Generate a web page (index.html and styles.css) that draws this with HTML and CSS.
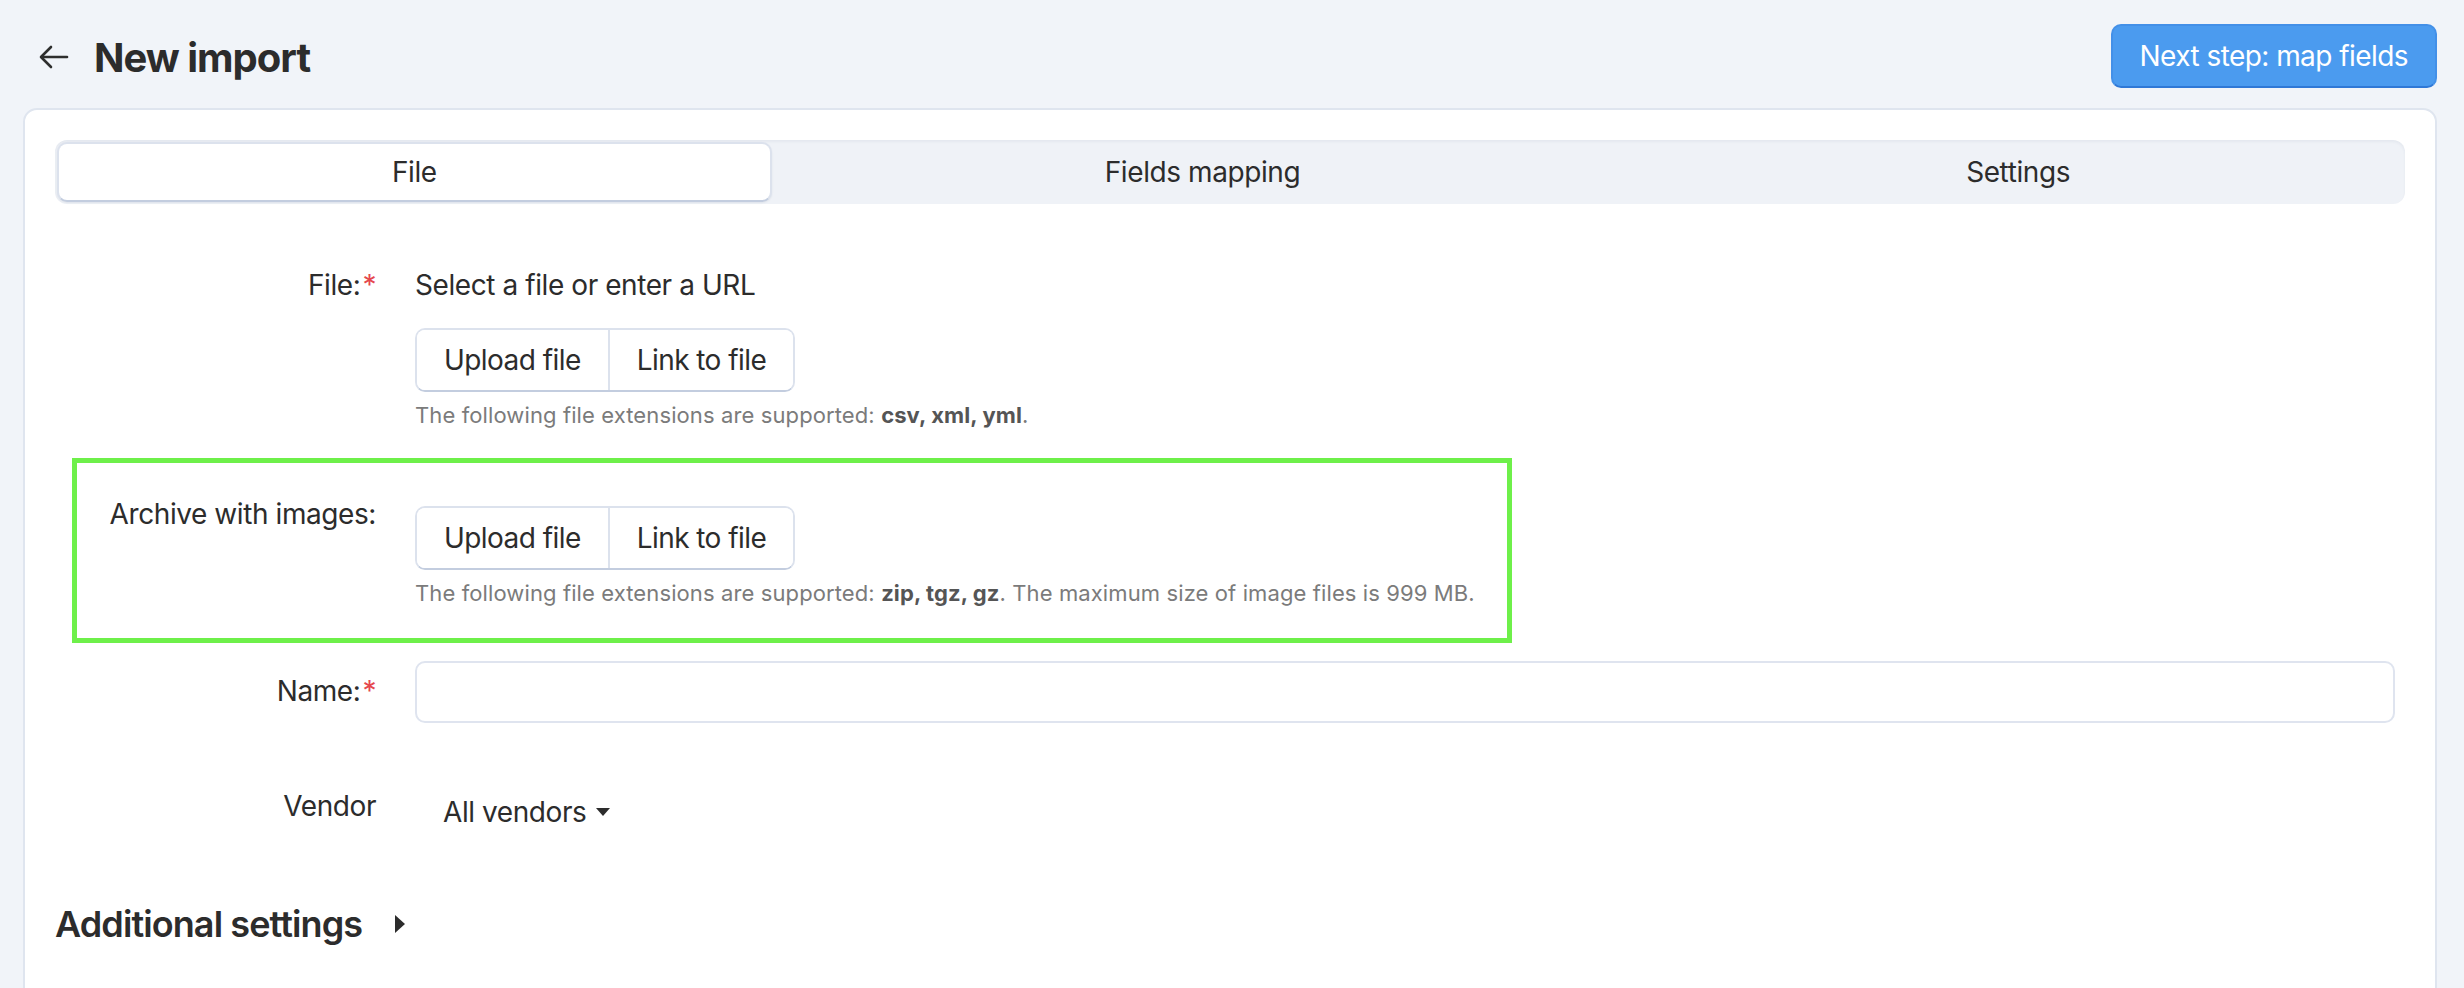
FILE: index.html
```html
<!DOCTYPE html>
<html lang="en">
<head>
    <meta charset="UTF-8">
    <meta name="viewport" content="width=device-width, initial-scale=1.0">
    <title>New import</title>
    <link rel="stylesheet" href="styles.css">
</head>
<body>

    <header class="page-header">
        <div class="title-wrap">
            <a class="back-link" href="#">
                <svg width="30" height="24" viewBox="0 0 30 24" fill="none" stroke="#2e2e2e" stroke-width="2.6" stroke-linecap="round" stroke-linejoin="round">
                    <path d="M28 12H3"/>
                    <path d="M12 2L2 12l10 10"/>
                </svg>
            </a>
            <h1>New import</h1>
        </div>
        <button class="btn-primary">Next step: map fields</button>
    </header>

    <main class="card">
        <nav class="tabs">
            <div class="tab active">File</div>
            <div class="tab">Fields mapping</div>
            <div class="tab">Settings</div>
        </nav>

        <div class="form">
            <div class="form-row row-file">
                <label class="form-label">File:<span class="req">*</span></label>
                <div class="form-control">
                    <div class="control-text">Select a file or enter a URL</div>
                    <div class="btn-group">
                        <button>Upload file</button>
                        <button>Link to file</button>
                    </div>
                    <div class="hint">The following file extensions are supported: <b>csv, xml, yml</b>.</div>
                </div>
            </div>

            <div class="form-row row-archive">
                <label class="form-label">Archive with images:</label>
                <div class="form-control">
                    <div class="btn-group">
                        <button>Upload file</button>
                        <button>Link to file</button>
                    </div>
                    <div class="hint">The following file extensions are supported: <b>zip, tgz, gz</b>. The maximum size of image files is 999 MB.</div>
                </div>
            </div>

            <div class="form-row row-name">
                <label class="form-label" for="importName">Name:<span class="req">*</span></label>
                <div class="form-control">
                    <input type="text" id="importName" class="text-input">
                </div>
            </div>

            <div class="form-row row-vendor">
                <label class="form-label">Vendor</label>
                <div class="form-control">
                    <a class="dropdown" href="#">All vendors <span class="caret-down"></span></a>
                </div>
            </div>
        </div>

        <h2 class="section-toggle">Additional settings <span class="caret-right"></span></h2>
    </main>

</body>
</html>
```

FILE: styles.css
```css
body {
    margin: 0;
    background-color: #f1f4f9;
    color: #2c2c2c;
    font-family: Inter, "Noto Sans", "Liberation Sans", sans-serif;
    font-size: 28px;
    line-height: 40px;
    letter-spacing: -0.015em;
    overflow: hidden;
}
.page-header {
    display: flex;
    align-items: center;
    justify-content: space-between;
    padding: 24px 27px 0 39px;
}
.title-wrap {
    display: flex;
    align-items: center;
    gap: 25px;
}
.back-link {
    display: flex;
    padding-top: 2px;
}
h1 {
    margin: 0;
    padding-top: 3px;
    font-size: 40px;
    line-height: 46px;
    font-weight: 700;
    letter-spacing: -0.025em;
}
.btn-primary {
    height: 64px;
    padding: 0 27px;
    background-color: #4b9bef;
    color: #fff;
    border: 2px solid #4390e8;
    border-bottom-color: #2f78d6;
    border-radius: 10px;
    font-family: inherit;
    font-size: 28px;
    letter-spacing: -0.02em;
    cursor: pointer;
}
.card {
    margin: 20px 27px 0 23px;
    min-height: 900px;
    padding: 30px 30px 0;
    background-color: #fff;
    border: 2px solid #dfe5ef;
    border-radius: 14px;
}
.tabs {
    display: flex;
    height: 64px;
    padding: 2px;
    box-sizing: border-box;
    background-color: #eff2f7;
    border-radius: 12px;
    box-shadow: inset 0 2px 3px rgba(30, 50, 90, 0.05);
}
.tab {
    flex: 1 1 auto;
    display: flex;
    align-items: center;
    justify-content: center;
    border-radius: 10px;
}
.tab.active {
    background-color: #fff;
    border: 2px solid #dce2ed;
    border-bottom-color: #c3cddf;
    box-shadow: 0 1px 2px rgba(30, 50, 90, 0.08);
}
.form {
    margin-top: 61px;
}
.form-row {
    display: grid;
    grid-template-columns: 321px 1fr;
    column-gap: 39px;
    align-items: start;
}
.form-label {
    text-align: right;
}
.req {
    color: #e5484d;
    margin-left: 2px;
}
.control-text {
    line-height: 40px;
}
.btn-group {
    display: inline-flex;
    border: 2px solid #dce2ed;
    border-bottom-color: #c3cddf;
    border-radius: 10px;
    overflow: hidden;
}
.btn-group button {
    height: 60px;
    padding: 0 27px;
    background-color: #fff;
    border: none;
    color: #2c2c2c;
    font-family: inherit;
    font-size: 28px;
    letter-spacing: -0.02em;
    cursor: pointer;
}
.btn-group button + button {
    border-left: 2px solid #dce2ed;
}
.row-file .btn-group {
    margin-top: 23px;
}
.form-control {
    display: flex;
    flex-direction: column;
    align-items: flex-start;
}
.hint {
    margin-top: 8px;
    font-size: 22px;
    line-height: 30px;
    color: #7b7b7b;
    letter-spacing: 0.005em;
}
.hint b {
    color: #555;
}
/* highlighted row */
.row-archive {
    width: 1440px;
    box-sizing: border-box;
    margin: 28px 0 0 17px;
    padding: 31px 0 30px;
    grid-template-columns: 299px 1fr;
    border: 5px solid #6ef04a;
}
.row-archive .btn-group {
    margin-top: 12px;
}
.row-name {
    margin-top: 18px;
}
.row-name .form-label {
    padding-top: 10px;
}
.row-name .form-control {
    align-items: stretch;
    padding-right: 10px;
}
.text-input {
    height: 62px;
    box-sizing: border-box;
    border: 2px solid #dfe4ef;
    border-radius: 10px;
    font-family: inherit;
    font-size: 28px;
    padding: 0 20px;
}
.row-vendor {
    margin-top: 63px;
}
.row-vendor .form-control {
    padding-top: 6px;
}
.dropdown {
    display: inline-flex;
    align-items: center;
    gap: 10px;
    margin-left: 28px;
    color: #2c2c2c;
    text-decoration: none;
}
.caret-down {
    width: 0;
    height: 0;
    border-left: 7px solid transparent;
    border-right: 7px solid transparent;
    border-top: 8px solid #2c2c2c;
}
.section-toggle {
    display: flex;
    align-items: center;
    gap: 33px;
    margin: 70px 0 0;
    font-size: 36px;
    line-height: 44px;
    font-weight: 600;
    letter-spacing: -0.025em;
}
.caret-right {
    width: 0;
    height: 0;
    border-top: 9px solid transparent;
    border-bottom: 9px solid transparent;
    border-left: 10px solid #2c2c2c;
}
```
